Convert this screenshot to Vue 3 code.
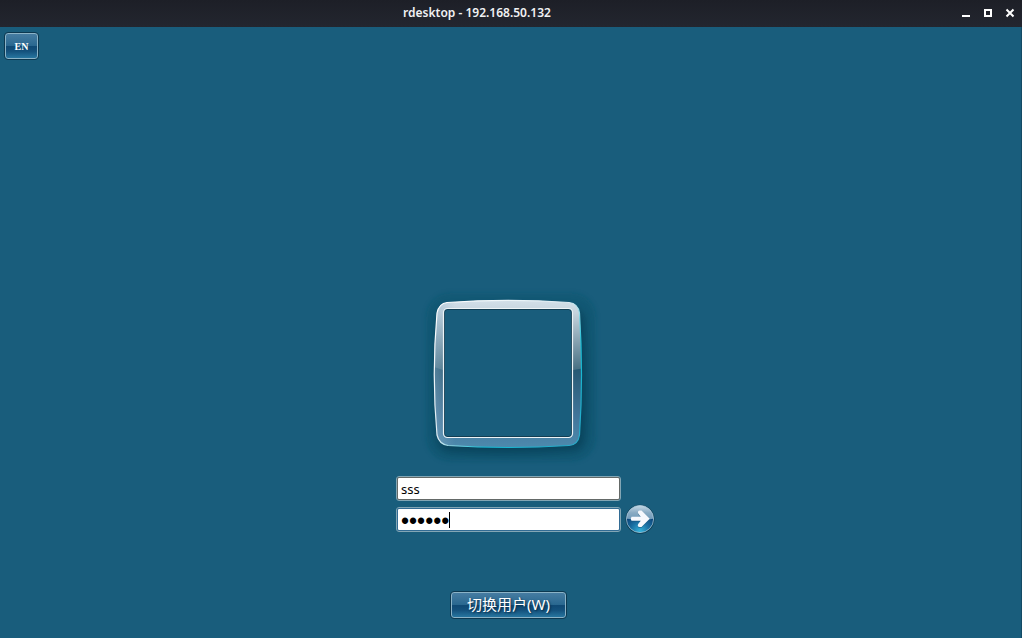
<script setup>
import { ref } from 'vue'

const user = ref('sss')
const password = ref('secret')
</script>

<template>
  <div class="window">
    <header class="titlebar">
      <h1 class="title">rdesktop - 192.168.50.132</h1>
      <div class="controls">
        <button class="control" type="button" aria-label="Minimize">
          <svg viewBox="0 0 10 10" shape-rendering="crispEdges"><path d="M1 7h8v2H1z" fill="#fff" /></svg>
        </button>
        <button class="control" type="button" aria-label="Maximize">
          <svg viewBox="0 0 10 10" shape-rendering="crispEdges"><path d="M2 2h6v6H2z" fill="none" stroke="#fff" stroke-width="2" /></svg>
        </button>
        <button class="control" type="button" aria-label="Close">
          <svg viewBox="0 0 10 10"><path d="M1.5 1.5l7 7M8.5 1.5L1.5 8.5" stroke="#fff" stroke-width="2" /></svg>
        </button>
      </div>
    </header>

    <main class="desktop">
      <button class="glass lang" type="button">EN</button>

      <div class="login">
        <svg class="frame" viewBox="0 0 187 183" aria-hidden="true">
          <defs>
            <linearGradient id="upper" x1="0" y1="14" x2="0" y2="83" gradientUnits="userSpaceOnUse">
              <stop offset="0" stop-color="#d5e1ea" />
              <stop offset=".2" stop-color="#c5d3dd" />
              <stop offset="1" stop-color="#4c7386" />
            </linearGradient>
            <linearGradient id="lower" x1="0" y1="83" x2="0" y2="163" gradientUnits="userSpaceOnUse">
              <stop offset="0" stop-color="#265872" />
              <stop offset=".6" stop-color="#42759a" />
              <stop offset="1" stop-color="#4d8aad" />
            </linearGradient>
            <linearGradient id="rim" x1="20" y1="20" x2="166" y2="160" gradientUnits="userSpaceOnUse">
              <stop offset="0" stop-color="#fff" />
              <stop offset=".47" stop-color="#dcebf2" />
              <stop offset=".66" stop-color="#12bdd6" />
              <stop offset="1" stop-color="#2aa9c8" />
            </linearGradient>
            <linearGradient id="leftLight" x1="19" y1="0" x2="40" y2="0" gradientUnits="userSpaceOnUse">
              <stop offset="0" stop-color="#8eb2ca" stop-opacity=".45" />
              <stop offset="1" stop-color="#8eb2ca" stop-opacity="0" />
            </linearGradient>
            <filter id="soft" x="-20%" y="-20%" width="140%" height="140%">
              <feGaussianBlur stdDeviation="5" />
            </filter>
            <filter id="edge" x="-20%" y="-20%" width="140%" height="140%">
              <feGaussianBlur stdDeviation="2" />
            </filter>
            <clipPath id="top"><path d="M0 0H187V82H158Q162 81 170 81V83L158 85H28L19 82H0z" /></clipPath>
            <mask id="outside">
              <path d="M0 0H187V183H0z" fill="#fff" />
              <rect x="29" y="24" width="128" height="128" rx="3" fill="#000" />
            </mask>
          </defs>
          <g mask="url(#outside)">
            <rect x="11" y="8" width="170" height="168" rx="24" fill="#07576f" opacity=".55" filter="url(#edge)" />
            <path d="M33 24Q95 20 158 24Q167 25 169 33Q174 94 170 154Q168 165 159 166Q93 171 33 167Q23 165 22 154Q18 90 23 34Q24 25 33 24z" fill="#032f42" opacity=".5" filter="url(#soft)" />
            <path d="M32 17.5Q93 13.2 154 17.5Q163 18.5 164.5 28Q168.5 90 164.5 150Q163 160 154 160.5Q93 164.5 33 160.5Q24 159 22 150Q16.5 90 22 28Q24 18.5 32 17.5z" fill="url(#lower)" />
            <path d="M32 17.5Q93 13.2 154 17.5Q163 18.5 164.5 28Q168.5 90 164.5 150Q163 160 154 160.5Q93 164.5 33 160.5Q24 159 22 150Q16.5 90 22 28Q24 18.5 32 17.5z" fill="url(#upper)" clip-path="url(#top)" />
            <path d="M32 17.5H40V160.5H33Q24 159 22 150Q16.5 90 22 28Q24 18.5 32 17.5z" fill="url(#leftLight)" />
            <path d="M32 17.5Q93 13.2 154 17.5Q163 18.5 164.5 28Q168.5 90 164.5 150Q163 160 154 160.5Q93 164.5 33 160.5Q24 159 22 150Q16.5 90 22 28Q24 18.5 32 17.5z" fill="none" stroke="url(#rim)" stroke-width="1.2" />
          </g>
          <rect x="29.5" y="24.5" width="127" height="127" rx="3" fill="none" stroke="#123e53" />
          <rect x="28.5" y="23.5" width="129" height="129" rx="4" fill="none" stroke="#edf3f6" stroke-width="1.2" />
        </svg>

        <form class="form" @submit.prevent>
          <div class="field">
            <input v-model="user" class="input" type="text" aria-label="User name" />
          </div>
          <div class="field active">
            <input v-model="password" class="input secret" type="password" aria-label="Password" />
            <span class="caret"></span>
          </div>
          <button class="go" type="submit" aria-label="Log on">
            <svg viewBox="0 0 30 30">
              <defs>
                <linearGradient id="ballTop" x1="0" y1="0" x2="0" y2="1">
                  <stop offset="0" stop-color="#c5d9e6" />
                  <stop offset=".5" stop-color="#8aabc4" />
                  <stop offset="1" stop-color="#6b98b8" />
                </linearGradient>
                <radialGradient id="ballBase" cx=".5" cy=".95" r=".65">
                  <stop offset="0" stop-color="#35b4dc" />
                  <stop offset=".5" stop-color="#1b72a5" />
                  <stop offset="1" stop-color="#0b4378" />
                </radialGradient>
              </defs>
              <circle cx="15" cy="15.3" r="14.5" fill="#0b3a50" />
              <circle cx="15" cy="15" r="13.6" fill="url(#ballBase)" />
              <path d="M1.6 14.8A13.4 13.4 0 0 1 28.4 14.8Q21 16.3 15 15.8Q8 15.3 1.6 14.8z" fill="url(#ballTop)" />
              <circle cx="15" cy="15" r="13.6" fill="none" stroke="#b5d4e4" stroke-width=".7" />
              <path d="M6.5 12.7h9.3l-2.6-3.1q-1-2.8 1.6-3.1h1.7l8.2 8.3-8.2 8.2h-2q-2.6-.5-1.3-3l2.6-3.2H6.5q-1.4-2 0-4.1z" fill="#18557d" opacity=".5" transform="translate(0 1)" />
              <path d="M6.5 12.7h9.3l-2.6-3.1q-1-2.8 1.6-3.1h1.7l8.2 8.3-8.2 8.2h-2q-2.6-.5-1.3-3l2.6-3.2H6.5q-1.4-2 0-4.1z" fill="#f6f8fd" />
            </svg>
          </button>
        </form>

        <button class="glass switch" type="button">切换用户(W)</button>
      </div>
    </main>
  </div>
</template>

<style>
body {
  margin: 0;
  background: #195d7c;
}
</style>

<style scoped>
.window {
  box-sizing: border-box;
  display: flex;
  flex-direction: column;
  min-height: 100vh;
  background: #195d7c;
  font-family: "Noto Sans", "Noto Sans CJK SC", sans-serif;
}
.titlebar {
  box-sizing: border-box;
  display: flex;
  align-items: center;
  height: 27px;
  padding-bottom: 1px;
  background: linear-gradient(#1d1f27, #23262f);
}
.title {
  flex: 1;
  margin: 0;
  padding-left: 13px;
  color: #f0f1f3;
  font-size: 12px;
  font-weight: 600;
  line-height: 26px;
  text-align: center;
}
.controls {
  display: flex;
  gap: 12px;
  padding: 0 7px 0 20px;
}
.control {
  width: 10px;
  height: 10px;
  padding: 0;
  border: 0;
  background: none;
}
.control svg {
  display: block;
  width: 100%;
  height: 100%;
}
.desktop {
  flex: 1;
  display: flex;
  flex-direction: column;
  justify-content: space-between;
  align-items: flex-start;
  padding: 5px 4px 19px 0;
  border-right: 1px solid #134a64;
}
.glass {
  box-sizing: border-box;
  height: 28px;
  padding: 0;
  border: 1px solid #0c3850;
  border-radius: 4px;
  background: linear-gradient(#487ea3 0%, #2a6890 48%, #0f4974 52%, #14517c 70%, #2a7ba5 100%);
  box-shadow: inset 0 0 0 1px #8bb3c7;
  color: #fff;
  text-align: center;
}
.lang {
  width: 35px;
  margin-left: 4px;
  font: 700 10px "Liberation Serif", serif;
}
.login {
  display: flex;
  flex-direction: column;
  align-items: center;
  width: 100%;
}
.frame {
  display: block;
  width: 187px;
  height: 183px;
  margin-bottom: 8px;
}
.form {
  display: grid;
  grid-template-columns: 1fr 225px 1fr;
  row-gap: 6px;
  width: 100%;
  margin-bottom: 59px;
}
.field {
  grid-column: 2;
  box-sizing: border-box;
  position: relative;
  height: 25px;
  border: 1px solid #83a6b5;
  border-radius: 3px;
}
.input {
  display: block;
  box-sizing: border-box;
  width: 100%;
  height: 100%;
  padding: 0 3px;
  border: 1px solid #646967;
  border-radius: 2px;
  outline: 0;
  background: #fff;
  color: #000;
  font: 13px "Noto Sans", sans-serif;
}
.active .input {
  border-color: #326b94;
}
.input.secret {
  padding-top: 3px;
  font: 23px "Liberation Sans", sans-serif;
}
.caret {
  position: absolute;
  top: 4px;
  left: 52px;
  width: 1px;
  height: 16px;
  background: #000;
}
.go {
  grid-column: 3;
  grid-row: 2;
  align-self: start;
  width: 30px;
  height: 30px;
  margin: -3px 0 -3px 4px;
  padding: 0;
  border: 0;
  background: none;
}
.go svg {
  display: block;
  width: 100%;
  height: 100%;
}
.switch {
  width: 117px;
  padding-bottom: 2px;
  font: 15px "Noto Sans", "Noto Sans CJK SC", sans-serif;
  line-height: 24px;
  text-shadow: 1px 1px 2px #062b45;
}
</style>
